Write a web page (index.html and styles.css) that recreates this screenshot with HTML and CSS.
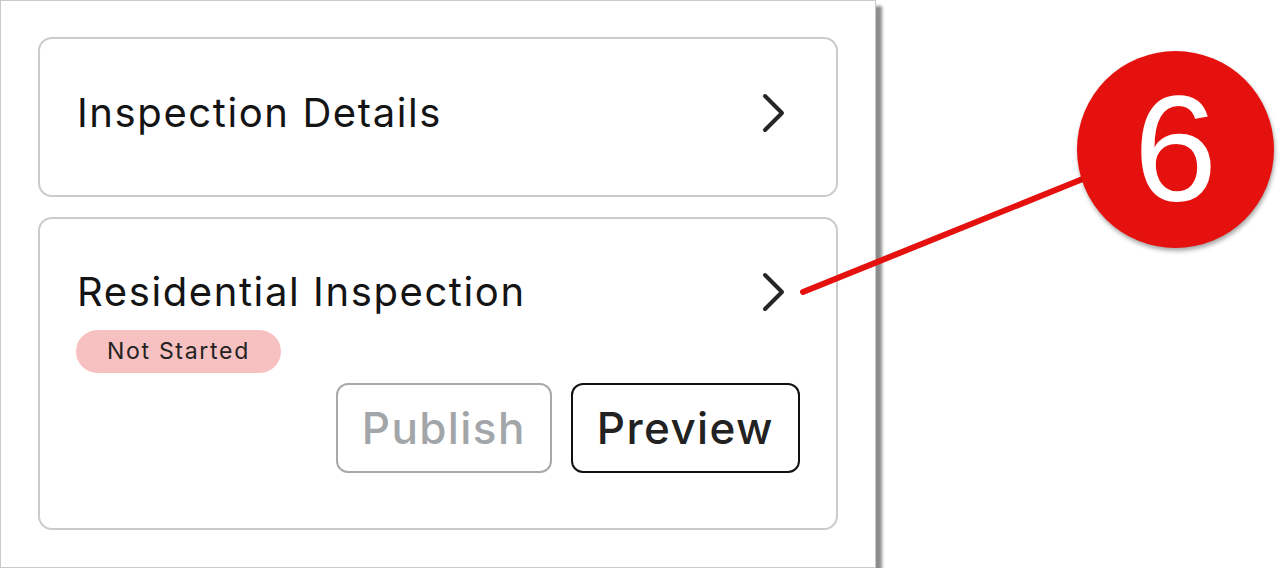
FILE: index.html
```html
<!DOCTYPE html>
<html lang="en">
<head>
    <meta charset="UTF-8">
    <meta name="viewport" content="width=device-width, initial-scale=1.0">
    <title>Inspection - Callout 6</title>
    <link rel="stylesheet" href="styles.css">
</head>
<body>
    <div class="panel">
        <div class="card card-link">
            <span class="card-title">Inspection Details</span>
            <svg class="chevron" width="24" height="40" viewBox="0 0 24 40">
                <path d="M3 3 L20 20 L3 37" />
            </svg>
        </div>

        <div class="card card-inspection">
            <div class="card-head">
                <span class="card-title">Residential Inspection</span>
                <svg class="chevron" width="24" height="40" viewBox="0 0 24 40">
                    <path d="M3 3 L20 20 L3 37" />
                </svg>
            </div>
            <span class="badge">Not Started</span>
            <div class="actions">
                <button class="btn btn-disabled">Publish</button>
                <button class="btn">Preview</button>
            </div>
        </div>
    </div>

    <!-- annotation overlay -->
    <svg class="callout-line" width="1280" height="578" viewBox="0 0 1280 578">
        <line x1="803" y1="292" x2="1100" y2="172" />
    </svg>
    <div class="callout-badge">6</div>
</body>
</html>
```

FILE: styles.css
```css
body {
    margin: 0;
    background-color: white;
    font-family: Inter, "Noto Sans", sans-serif;
    color: #1e1e1e;
}
.panel {
    width: 876px;
    height: 568px;
    box-sizing: border-box;
    padding: 36px 37px;
    background-color: white;
    border: 1px solid #c9c9c9;
    box-shadow: 6px 6px 3px rgba(0,0,0,0.45);
    display: flex;
    flex-direction: column;
    gap: 20px;
}
.card {
    width: 800px;
    box-sizing: border-box;
    border: 2px solid #cbcbcb;
    border-radius: 14px;
    padding: 0 36px 0 37px;
}
.card-link {
    height: 160px;
    padding-bottom: 8px;
    display: flex;
    align-items: center;
    justify-content: space-between;
}
.card-title {
    font-size: 40px;
    line-height: 48px;
    font-weight: 400;
    letter-spacing: 1.6px;
    color: #141414;
}
.chevron {
    margin-right: 14px;
}
.chevron path {
    fill: none;
    stroke: #262626;
    stroke-width: 4;
    stroke-linecap: round;
    stroke-linejoin: round;
}
.card-inspection {
    height: 313px;
    padding-top: 49px;
}
.card-head {
    display: flex;
    align-items: center;
    justify-content: space-between;
}
.badge {
    display: inline-block;
    margin-top: 14px;
    margin-left: -1px;
    padding: 0 31px 0 31px;
    height: 43px;
    line-height: 43px;
    border-radius: 22px;
    background-color: #f8c1c1;
    font-size: 23px;
    letter-spacing: 1.7px;
    color: #222;
}
.actions {
    display: flex;
    justify-content: flex-end;
    gap: 19px;
    margin-top: 10px;
}
.btn {
    height: 90px;
    padding: 0 24px;
    background-color: white;
    border: 2px solid #111;
    border-radius: 12px;
    font-family: Inter, "Noto Sans", sans-serif;
    font-size: 44px;
    font-weight: 500;
    letter-spacing: 1.4px;
    color: #222;
    cursor: pointer;
}
.btn-disabled {
    border-color: #a9a9a9;
    color: #a3a6a9;
}
.callout-line {
    position: absolute;
    top: 0;
    left: 0;
    pointer-events: none;
}
.callout-line line {
    stroke: #e5110e;
    stroke-width: 6;
    stroke-linecap: round;
}
.callout-badge {
    position: absolute;
    left: 1077px;
    top: 51px;
    width: 197px;
    height: 197px;
    border-radius: 50%;
    background-color: #e5110e;
    box-shadow: 1px 3px 4px rgba(0,0,0,0.35);
    display: flex;
    align-items: center;
    justify-content: center;
    font-family: "Liberation Sans", Arial, sans-serif;
    font-size: 150px;
    color: white;
}
```
